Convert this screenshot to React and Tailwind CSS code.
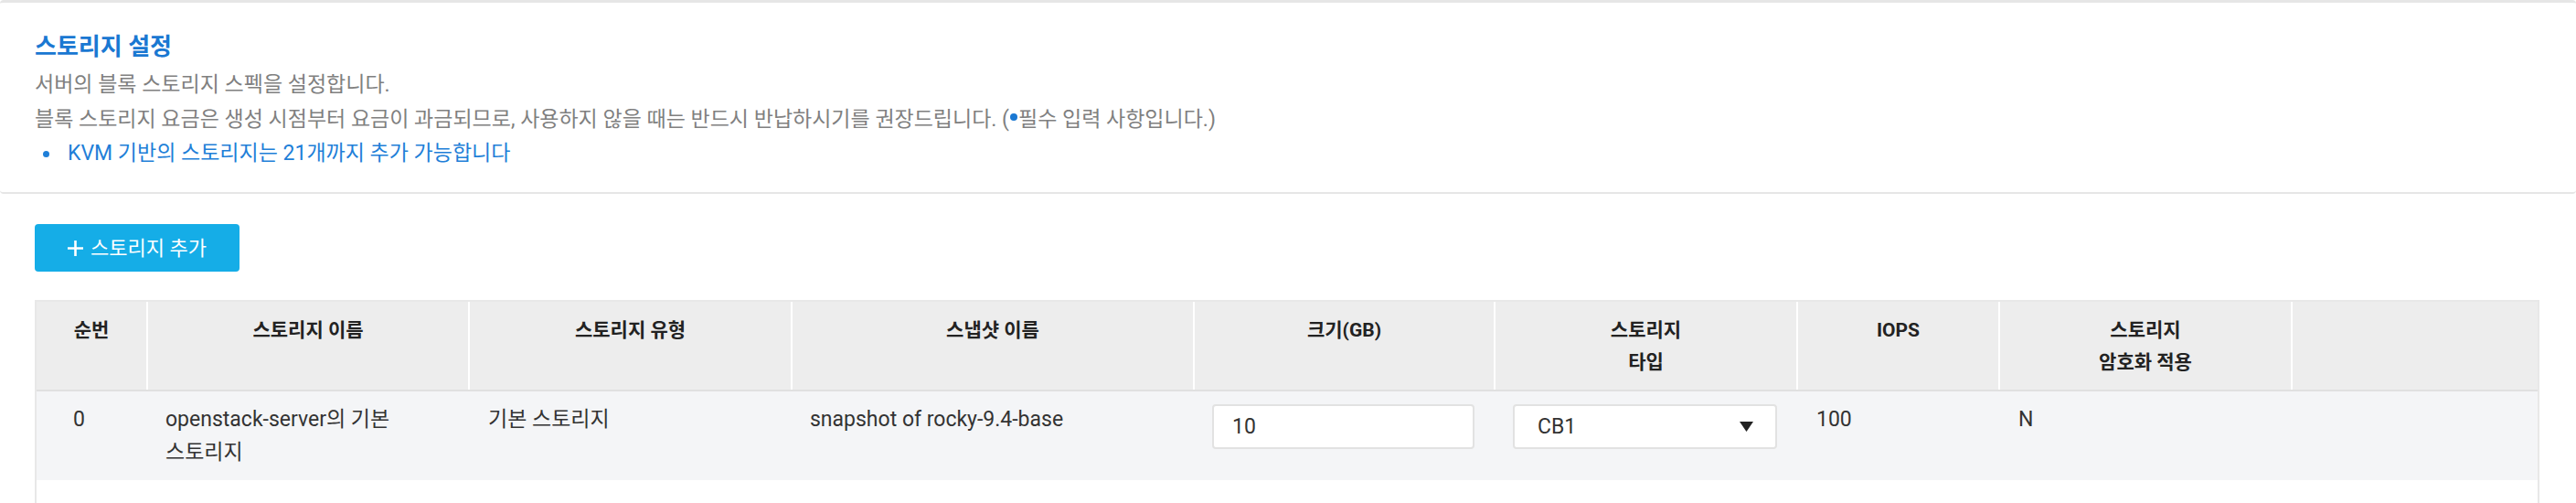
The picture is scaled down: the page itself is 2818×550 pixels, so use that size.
import React from 'react';

const font = "font-['Roboto','Noto_Sans_CJK_KR',sans-serif]";

const cols =
  'grid grid-cols-[120px_352px_353px_440px_329px_331px_221px_320px_1fr]';

const HeadCell = ({ children, first }) => (
  <div
    className={`pt-[14px] text-center text-[21px] font-bold leading-[35px] text-[#222] ${
      first ? '' : 'border-l-2 border-white'
    }`}
  >
    {children}
  </div>
);

const App = () => {
  return (
    <div className={`h-[550px] w-[2818px] overflow-hidden bg-white ${font}`}>
      {/* 상단 안내 카드 */}
      <div className="rounded-[4px] border-t-[3px] border-b-2 border-[#e6e6e6] pl-[38px] pt-[33px] pb-[24px]">
        <h2 className="text-[26px] font-bold leading-[30px] text-[#1a78d2]">스토리지 설정</h2>
        <div className="mt-[8px] text-[23px] leading-[38px] text-[#808080]">
          <p>서버의 블록 스토리지 스펙을 설정합니다.</p>
          <p>
            블록 스토리지 요금은 생성 시점부터 요금이 과금되므로, 사용하지 않을 때는 반드시
            반납하시기를 권장드립니다. (
            <span className="mx-[1px] mb-[8px] inline-block h-[8px] w-[8px] rounded-full bg-[#1a78d2] align-middle" />
            필수 입력 사항입니다.)
          </p>
        </div>
        <ul className="text-[23px] leading-[36px] text-[#1f7fd8]">
          <li className="flex items-center">
            <span className="ml-[9px] mr-[20px] h-[7px] w-[7px] rounded-full bg-[#1f7fd8]" />
            KVM 기반의 스토리지는 21개까지 추가 가능합니다
          </li>
        </ul>
      </div>

      <div className="pl-[38px] pr-[40px]">
        {/* 추가 버튼 */}
        <button className="mt-[33px] flex h-[52px] w-[224px] items-center justify-center gap-[8px] rounded-[4px] bg-[#15ade7] text-[22px] text-white">
          <svg width="17" height="17" viewBox="0 0 17 17">
            <path d="M8.5 0v17M0 8.5h17" stroke="white" strokeWidth="2.6" />
          </svg>
          스토리지 추가
        </button>

        {/* 스토리지 테이블 */}
        <div className="mt-[31px] h-[260px] border-x-2 border-t-2 border-[#e8e8e8]">
          <div className={`${cols} h-[98px] border-b-2 border-[#e0e0e0] bg-[#ededed]`}>
            <HeadCell first>순번</HeadCell>
            <HeadCell>스토리지 이름</HeadCell>
            <HeadCell>스토리지 유형</HeadCell>
            <HeadCell>스냅샷 이름</HeadCell>
            <HeadCell>크기(GB)</HeadCell>
            <HeadCell>
              스토리지
              <br />
              타입
            </HeadCell>
            <HeadCell>IOPS</HeadCell>
            <HeadCell>
              스토리지
              <br />
              암호화 적용
            </HeadCell>
            <HeadCell />
          </div>

          <div className={`${cols} h-[97px] bg-[#f4f5f7] text-[23px] leading-[36px] text-[#333]`}>
            <div className="pl-[40px] pt-[13px]">0</div>
            <div className="break-keep pl-[21px] pr-[24px] pt-[13px]">openstack-server의 기본 스토리지</div>
            <div className="pl-[22px] pt-[13px]">기본 스토리지</div>
            <div className="pl-[21px] pt-[13px]">snapshot of rocky-9.4-base</div>
            <div className="px-[21px] pt-[14px]">
              <div className="flex h-[49px] items-center rounded-[4px] border-2 border-[#e2e2e2] bg-white pl-[20px]">
                10
              </div>
            </div>
            <div className="px-[21px] pt-[14px]">
              <div className="flex h-[49px] items-center justify-between rounded-[4px] border-2 border-[#e2e2e2] bg-white pl-[25px] pr-[24px]">
                <span>CB1</span>
                <svg width="15" height="11" viewBox="0 0 15 11">
                  <polygon points="0,0 15,0 7.5,11" fill="#222" />
                </svg>
              </div>
            </div>
            <div className="pl-[22px] pt-[13px]">100</div>
            <div className="pl-[22px] pt-[13px]">N</div>
            <div />
          </div>
        </div>
      </div>
    </div>
  );
};

export default App;
